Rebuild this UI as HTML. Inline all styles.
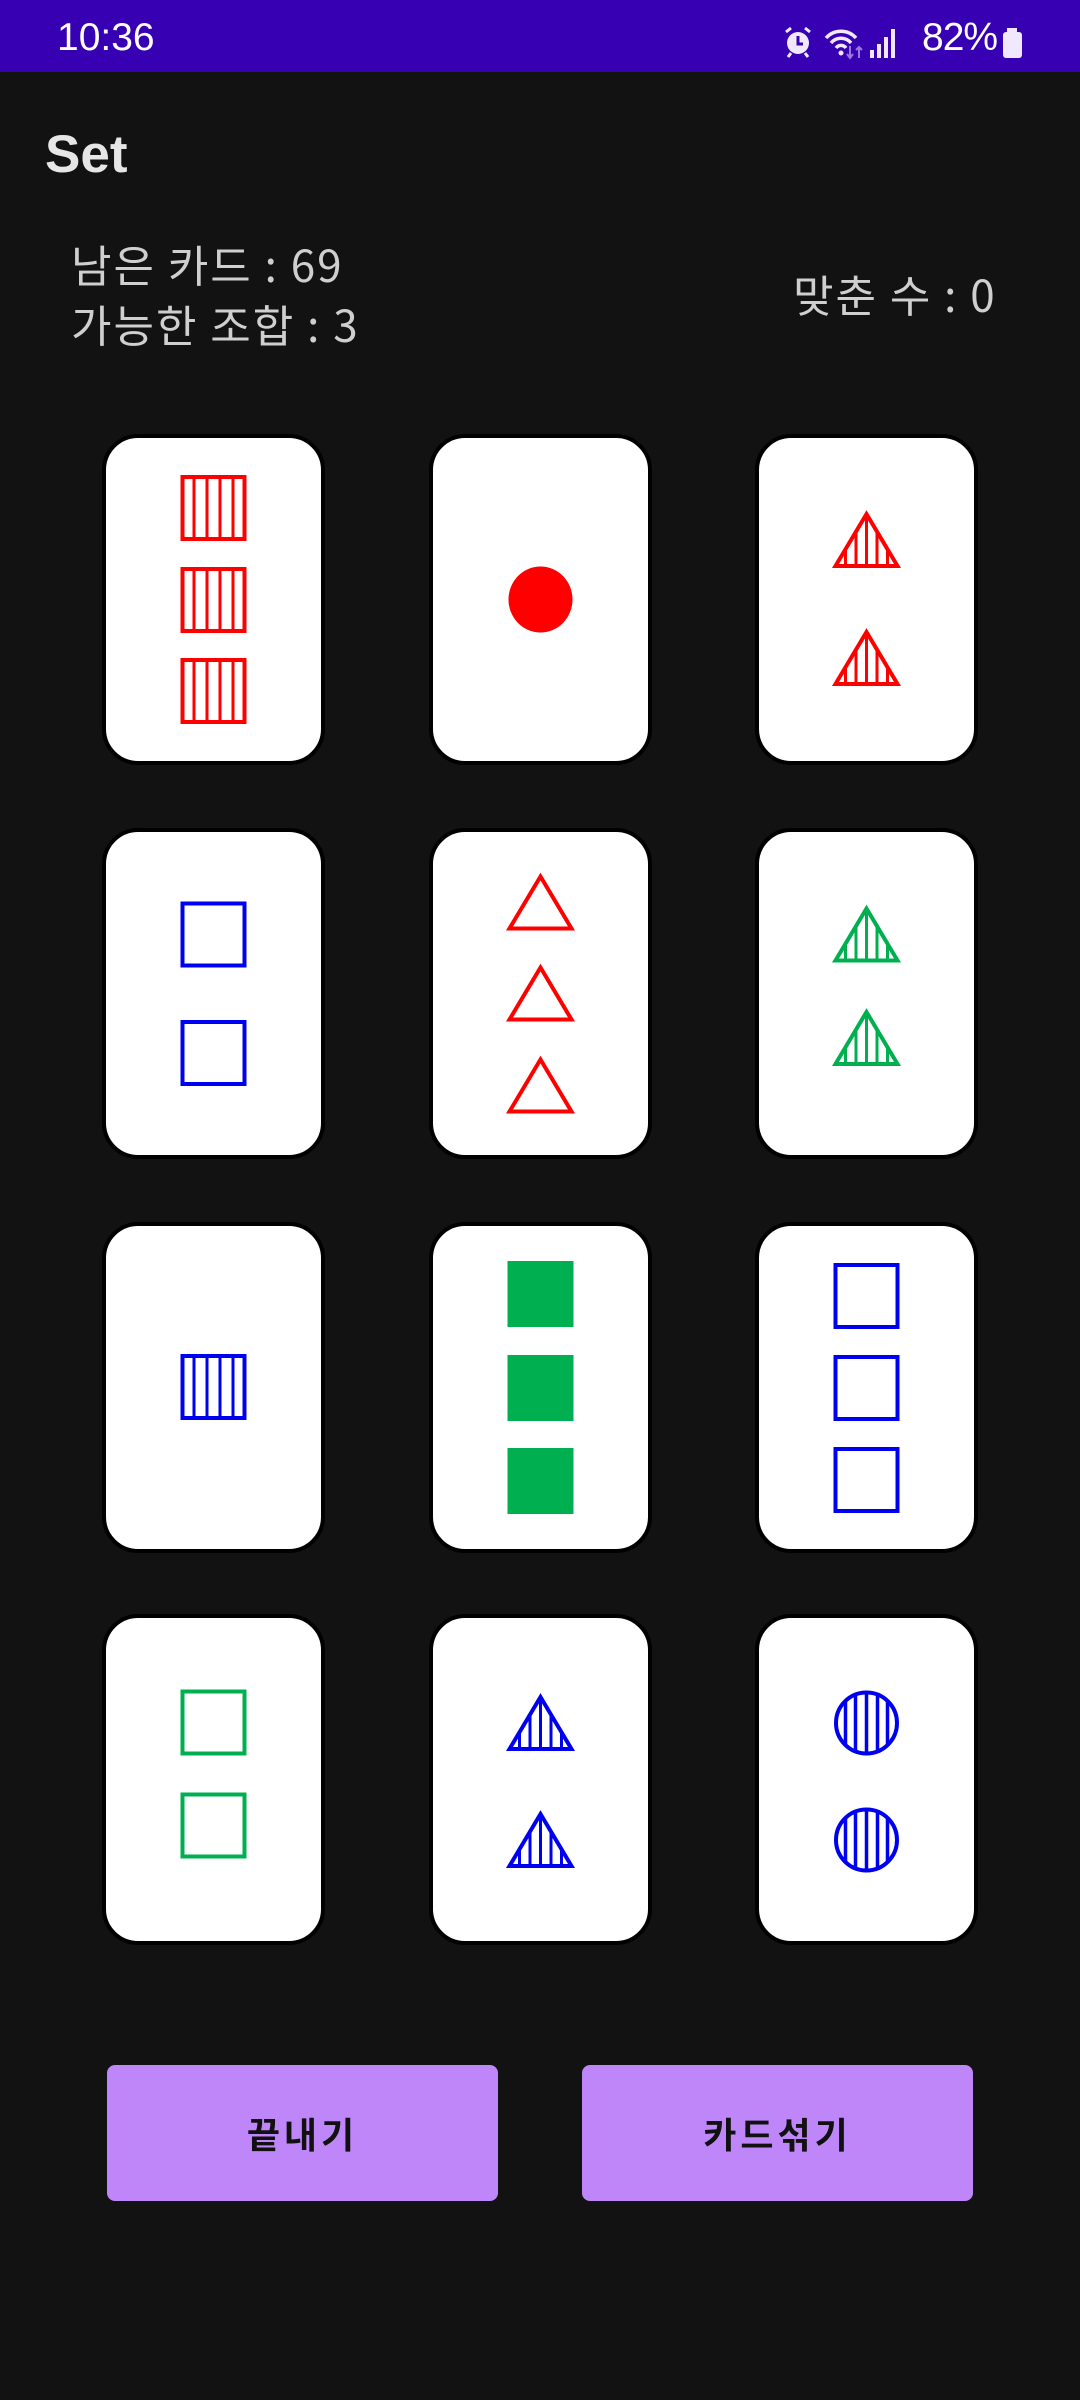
<!DOCTYPE html>
<html><head><meta charset="utf-8">
<style>
html,body{margin:0;padding:0;}
body{width:1080px;height:2400px;background:#121212;position:relative;overflow:hidden;font-family:"Liberation Sans","Noto Sans CJK KR",sans-serif;}
.sb{position:absolute;left:0;top:0;width:1080px;height:72px;background:#3700b3;}
.t{position:absolute;white-space:nowrap;}
.btn{position:absolute;top:2065px;height:136px;width:391px;background:#bf86fa;border-radius:8px;color:#111;font-family:"Noto Sans CJK KR",sans-serif;font-weight:bold;font-size:36px;letter-spacing:4px;display:flex;align-items:center;justify-content:center;}
.st{font-size:44px;line-height:60px;color:#cfcfcf;font-family:'Noto Sans CJK KR',sans-serif;letter-spacing:2px;}
</style></head><body>
<div class="sb"></div>
<div class="t" style="left:57px;top:16px;font-size:39px;color:#fff;">10:36</div>
<svg style="position:absolute;left:780px;top:22px" width="250" height="40" viewBox="0 0 250 40">
  <circle cx="18" cy="21" r="11" fill="#f0e8ff"/>
  <path d="M18 14v8h5" stroke="#3700b3" stroke-width="3" fill="none"/>
  <path d="M6 10l5-4M30 10l-5-4M11 31l-3 4M25 31l3 4" stroke="#f0e8ff" stroke-width="3"/>
  <path d="M46 16a20 20 0 0 1 30 0M51 21a13 13 0 0 1 20 0M56 26a6 6 0 0 1 10 0" stroke="#f0e8ff" stroke-width="3.5" fill="none"/>
  <circle cx="61" cy="31" r="2.5" fill="#f0e8ff"/>
  <path d="M70 24v12M67 32l3 4 3-4M79 36v-11M76 28l3-3 3 3" stroke="#9a78e0" stroke-width="2" fill="none"/>
  <rect x="90" y="28" width="4" height="8" fill="#f0e8ff"/>
  <rect x="97" y="22" width="4" height="14" fill="#f0e8ff"/>
  <rect x="104" y="15" width="4" height="21" fill="#f0e8ff"/>
  <rect x="111" y="7" width="4" height="29" fill="#f0e8ff"/>
</svg>
<div class="t" style="left:922px;top:16px;font-size:39px;color:#fff;letter-spacing:-1px;">82%</div>
<svg style="position:absolute;left:1002px;top:28px" width="22" height="32"><rect x="5" y="0" width="10" height="4" fill="#f0e8ff"/><rect x="1" y="4" width="19" height="26" rx="3" fill="#f0e8ff"/></svg>

<div class="t" style="left:45px;top:124px;font-size:53px;font-weight:bold;color:#e6e6e6;">Set</div>
<div class="t st" style="left:71px;top:233px;">남은 카드 : 69<br>가능한 조합 : 3</div>
<div class="t st" style="left:793px;top:263px;">맞춘 수 : 0</div>

<svg style="position:absolute;left:0;top:0" width="1080" height="2400">
<defs>
  <clipPath id="ctri"><polygon points="0,-27 -32,27 32,27"/></clipPath>
  <g id="sq"><rect x="-31" y="-31" width="62" height="62" fill="none" stroke="currentColor" stroke-width="4"/></g>
  <g id="sqf"><rect x="-33" y="-33" width="66" height="66" fill="currentColor"/></g>
  <g id="sqs"><rect x="-31" y="-31" width="62" height="62" fill="none" stroke="currentColor" stroke-width="4"/>
    <path d="M-19.5 -31V31M-6.5 -31V31M6.5 -31V31M19.5 -31V31" stroke="currentColor" stroke-width="3"/></g>
  <g id="cif"><ellipse cx="0" cy="0" rx="32" ry="33" fill="currentColor"/></g>
  <g id="cis"><circle r="30.5" fill="none" stroke="currentColor" stroke-width="4"/>
    <path d="M-21 -21.5V21.5M-11 -28V28M0 -30V30M11 -28V28M21 -21.5V21.5" stroke="currentColor" stroke-width="3.5"/></g>
  <g id="tri"><polygon points="0,-26 -31,26 31,26" fill="none" stroke="currentColor" stroke-width="4"/></g>
  <g id="tris"><polygon points="0,-26 -31,26 31,26" fill="none" stroke="currentColor" stroke-width="4"/>
    <g clip-path="url(#ctri)"><path d="M-21 -30V30M-10.5 -30V30M0 -30V30M10.5 -30V30M21 -30V30" stroke="currentColor" stroke-width="3"/></g></g>
</defs>
<g fill="#fff" stroke="#000" stroke-width="4">
  <rect x="104" y="436" width="219" height="327" rx="34"/>
  <rect x="431" y="436" width="219" height="327" rx="34"/>
  <rect x="757" y="436" width="219" height="327" rx="34"/>
  <rect x="104" y="830" width="219" height="327" rx="34"/>
  <rect x="431" y="830" width="219" height="327" rx="34"/>
  <rect x="757" y="830" width="219" height="327" rx="34"/>
  <rect x="104" y="1224" width="219" height="327" rx="34"/>
  <rect x="431" y="1224" width="219" height="327" rx="34"/>
  <rect x="757" y="1224" width="219" height="327" rx="34"/>
  <rect x="104" y="1616" width="219" height="327" rx="34"/>
  <rect x="431" y="1616" width="219" height="327" rx="34"/>
  <rect x="757" y="1616" width="219" height="327" rx="34"/>
</g>
<g color="#ff0000">
  <use href="#sqs" x="213.5" y="508"/><use href="#sqs" x="213.5" y="600"/><use href="#sqs" x="213.5" y="691"/>
  <use href="#cif" x="540.5" y="599.5"/>
  <use href="#tris" x="866.5" y="540"/><use href="#tris" x="866.5" y="658"/>
</g>
<use href="#sq" x="213.5" y="934.5" color="#0000f0"/><use href="#sq" x="213.5" y="1053" color="#0000f0"/>
<g color="#ff0000"><use href="#tri" x="540.5" y="902.5"/><use href="#tri" x="540.5" y="993.5"/><use href="#tri" x="540.5" y="1085.5"/></g>
<g color="#00b050"><use href="#tris" x="866.5" y="934.5"/><use href="#tris" x="866.5" y="1038"/></g>
<use href="#sqs" x="213.5" y="1387" color="#0000f0"/>
<g color="#00b050"><use href="#sqf" x="540.5" y="1294"/><use href="#sqf" x="540.5" y="1388"/><use href="#sqf" x="540.5" y="1481"/></g>
<g color="#0000f0"><use href="#sq" x="866.5" y="1296"/><use href="#sq" x="866.5" y="1388"/><use href="#sq" x="866.5" y="1480"/></g>
<g color="#00b050"><use href="#sq" x="213.5" y="1722.5"/><use href="#sq" x="213.5" y="1825.5"/></g>
<g color="#0000f0"><use href="#tris" x="540.5" y="1723"/><use href="#tris" x="540.5" y="1840"/>
  <use href="#cis" x="866.5" y="1723"/><use href="#cis" x="866.5" y="1840"/></g>
</svg>

<div class="btn" style="left:107px;">끝내기</div>
<div class="btn" style="left:582px;">카드섞기</div>
</body></html>
